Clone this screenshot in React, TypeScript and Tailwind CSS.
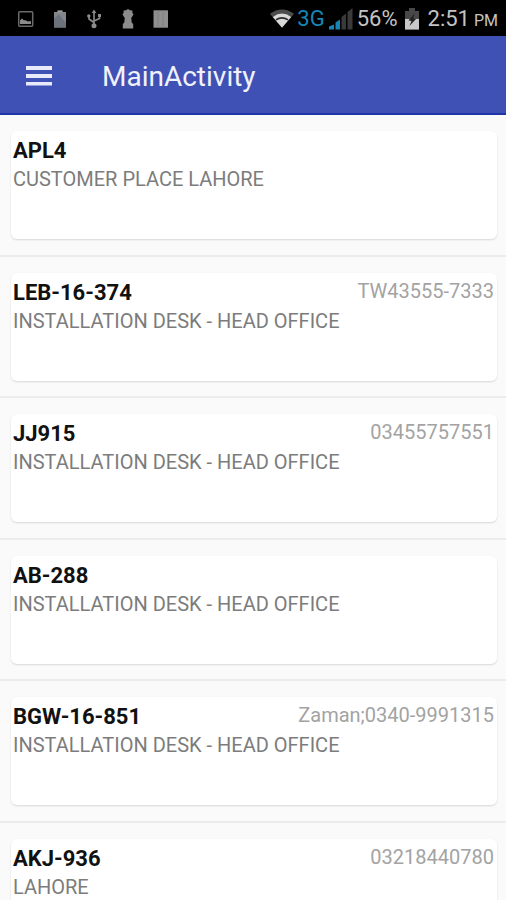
interface Vehicle {
  plate: string;
  place: string;
  contact?: string;
}

const VEHICLES: Vehicle[] = [
  { plate: 'APL4', place: 'CUSTOMER PLACE LAHORE' },
  { plate: 'LEB-16-374', place: 'INSTALLATION DESK - HEAD OFFICE', contact: 'TW43555-7333' },
  { plate: 'JJ915', place: 'INSTALLATION DESK - HEAD OFFICE', contact: '03455757551' },
  { plate: 'AB-288', place: 'INSTALLATION DESK - HEAD OFFICE' },
  { plate: 'BGW-16-851', place: 'INSTALLATION DESK - HEAD OFFICE', contact: 'Zaman;0340-9991315' },
  { plate: 'AKJ-936', place: 'LAHORE', contact: '03218440780' },
];

function NotificationIcons() {
  return (
    <div className="flex items-center gap-4 text-[#8c8c8c]">
      {/* picture */}
      <svg viewBox="0 0 18 18" className="h-[18px] w-[18px]" fill="currentColor">
        <rect x="1.7" y="1.7" width="14" height="14.5" rx="1" fill="none" stroke="#6a6a6a" strokeWidth="1.5" />
        <path d="M3 14v-3.500l2-2 1.800 1.800h2l1.200 1H14V14z" />
      </svg>
      {/* clipboard */}
      <svg viewBox="0 0 18 18" className="h-[18px] w-[18px]">
        <path d="M3 2h3.500V.3h5V2h3.500v15.500H3z" fill="#82868a" />
        <path d="M3 8.500L8 4.500l7 8.500v4.500H3z" fill="#6b727b" />
        <path d="M6.500 1.800h5" stroke="#a4a4a4" strokeWidth="1" />
      </svg>
      {/* usb */}
      <svg viewBox="0 0 18 20" className="h-5 w-[18px]" fill="none" stroke="currentColor" strokeWidth="1.6">
        <path d="M9 3v13M9 13.500L4 10V6.500M9 12l5.500-2.500v-3" />
        <path d="M9 .5L11.300 4H6.700z" fill="currentColor" stroke="none" />
        <circle cx="9" cy="16.700" r="2.500" fill="currentColor" stroke="none" />
        <circle cx="3.800" cy="7" r="1.700" fill="currentColor" stroke="none" />
        <path d="M13 5h3v3h-3z" fill="currentColor" stroke="none" />
      </svg>
      {/* keyhole */}
      <svg viewBox="0 0 18 20" className="h-5 w-[18px]" fill="currentColor">
        <path d="M9 0l2 1.200 2.300.4.200 2.400 1 1.500-1 1.500-.7 1.500h-.6l.5 5 1.500 1.500V19.500H3.800V15l1.500-1.500.5-5h-.6L4.500 7l-1-1.500 1-1.500.2-2.400L7 1.200z" />
      </svg>
      {/* barcode */}
      <svg viewBox="0 0 18 18" className="h-[18px] w-[18px]">
        <path d="M.500 .3h14.500v17.400H.500z" fill="#8f8f8f" />
        <path d="M5 .3v17.400M10 .3v17.400" stroke="#808080" strokeWidth="1" />
      </svg>
    </div>
  );
}

function StatusBar() {
  return (
    <div className="flex h-9 shrink-0 items-center justify-between bg-black pt-px pr-2 pl-[17px]">
      <NotificationIcons />
      <div className="flex items-center text-[#c4c4c4]">
        {/* wifi */}
        <svg viewBox="0 0 28 21" className="h-[21px] w-[26px]">
          <path d="M1 5.500Q14-4 27 5.500L24 9Q14 2 4 9z" fill="#4c4c4c" />
          <path d="M4 8.800Q14 1.500 24 8.800L14 20.500z" fill="#d8d8d8" />
          <path d="M7.500 12Q14 7.500 20.500 12" fill="none" stroke="#2c2c2c" strokeWidth="1.800" />
        </svg>
        <span className="ml-0.5 text-[22px] leading-6 text-[#1686b8]">3G</span>
        {/* signal */}
        <svg viewBox="0 0 24 22" className="ml-1 h-[22px] w-6">
          <path d="M0 21.500v-3l5-2v5zM6.500 21.500v-7l4.500-3v10z" fill="#1686b8" />
          <path d="M12.500 21.500V9L17 5.500v16zM18.500 21.500V4L23.500 0v21.500z" fill="#3a3a3a" />
        </svg>
        <span className="ml-1 text-[22px] leading-6">56%</span>
        {/* battery */}
        <svg viewBox="0 0 16 22" className="ml-1.5 h-[22px] w-4">
          <path d="M1 3h4V0h6v3h4v18.500H1z" fill="#484848" />
          <path d="M1 11h14v10.500H1z" fill="#c8c8c8" />
          <path d="M11 5L4.500 12.500l3 .5L5.500 18 12 11l-3-.5z" fill="#222" />
        </svg>
        <time className="ml-2 flex items-baseline gap-1 text-[22px] leading-6">
          2:51 <span className="text-base leading-4">PM</span>
        </time>
      </div>
    </div>
  );
}

function AppBar() {
  return (
    <header className="flex h-[79px] shrink-0 items-center gap-12 border-b-2 border-[#1f35a8] bg-[#3f51b5] px-6 pt-1 text-[#f0f1fb]">
      <button type="button" aria-label="Open navigation" className="p-0.5 pb-1">
        <svg viewBox="0 0 26 20" className="h-5 w-[26px]" fill="#e8e9fa">
          <path d="M0 0h26v4H0zM0 8h26v4H0zM0 16h26v3.500H0z" />
        </svg>
      </button>
      <h1 className="text-[28px] leading-8">MainActivity</h1>
    </header>
  );
}

function VehicleRow({ vehicle }: { vehicle: Vehicle }) {
  return (
    <li className="border-b-2 border-[#ececec] pt-4 pr-[9px] pb-4 pl-[11px] even:pb-[15px]">
      <article className="h-[108px] rounded-md bg-white pt-1.5 pr-[3px] pl-0.5 shadow-[0_1px_2px_rgba(0,0,0,0.14)]">
        <div className="flex items-start justify-between">
          <h2 className="text-[22px] leading-7 font-bold text-[#111]">{vehicle.plate}</h2>
          {vehicle.contact && (
            <span className="text-xl leading-6 text-[#a3a3a3]">{vehicle.contact}</span>
          )}
        </div>
        <p className="text-xl leading-7 text-[#7c7c7c]">{vehicle.place}</p>
      </article>
    </li>
  );
}

export default function App() {
  return (
    <div className="flex h-screen flex-col bg-[#fafafa] font-['Roboto',sans-serif]">
      <StatusBar />
      <AppBar />
      <main className="min-h-0 flex-1 overflow-y-auto [scrollbar-width:none]">
        <ul>
          {VEHICLES.map(vehicle => (
            <VehicleRow key={vehicle.plate} vehicle={vehicle} />
          ))}
        </ul>
      </main>
    </div>
  );
}
